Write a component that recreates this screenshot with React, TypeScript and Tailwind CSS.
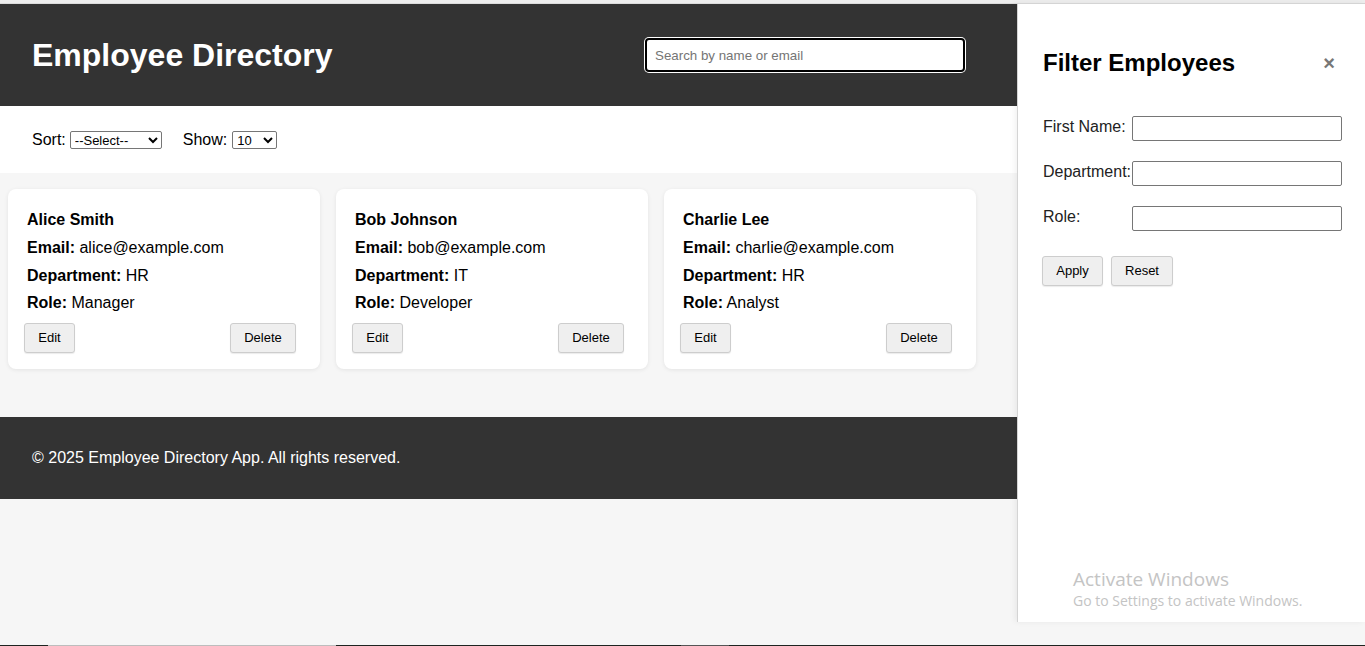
import React from 'react';

interface Employee {
  name: string;
  email: string;
  department: string;
  role: string;
}

const employees: Employee[] = [
  { name: 'Alice Smith', email: 'alice@example.com', department: 'HR', role: 'Manager' },
  { name: 'Bob Johnson', email: 'bob@example.com', department: 'IT', role: 'Developer' },
  { name: 'Charlie Lee', email: 'charlie@example.com', department: 'HR', role: 'Analyst' },
];

const btn =
  'h-[30px] rounded-[3px] border border-[#cdcdcd] bg-[#efefef] text-[13px] text-black shadow-[0_1px_1px_rgba(0,0,0,0.08)]';

const EmployeeCard: React.FC<{ emp: Employee }> = ({ emp }) => {
  return (
    <div className="w-[312px] rounded-lg bg-white px-4 pt-[22px] pb-4 shadow-[0_1px_4px_rgba(0,0,0,0.08)]">
      <div className="pl-[3px] text-[16px] leading-[18px]">
        <p className="mb-[10px] font-bold">{emp.name}</p>
        <p className="mb-[10px]">
          <span className="font-bold">Email:</span> {emp.email}
        </p>
        <p className="mb-[9px]">
          <span className="font-bold">Department:</span> {emp.department}
        </p>
        <p>
          <span className="font-bold">Role:</span> {emp.role}
        </p>
      </div>
      <div className="mt-[11px] mr-2 flex justify-between">
        <button className={`${btn} w-[51px]`}>Edit</button>
        <button className={`${btn} w-[66px]`}>Delete</button>
      </div>
    </div>
  );
};

const FilterPanel: React.FC = () => {
  const fields = [
    { label: 'First Name:', top: 'mt-0' },
    { label: 'Department:', top: 'mt-5' },
    { label: 'Role:', top: 'mt-5' },
  ];
  return (
    <aside className="absolute top-[3px] right-0 h-[619px] w-[348px] border-t border-l border-[#d4d4d4] bg-white pt-[44px] pl-[25px] shadow-[-2px_0_6px_rgba(0,0,0,0.06)]">
      <div className="flex items-center justify-between pr-[30px]">
        <h2 className="text-[24px] leading-[30px] font-bold text-black">Filter Employees</h2>
        <span className="text-[20px] leading-none font-bold text-[#777]">×</span>
      </div>
      <div className="mt-[38px]">
        {fields.map((f) => (
          <div key={f.label} className={`flex items-start ${f.top}`}>
            <label className="w-[89px] pt-[2px] text-[16px] leading-[18px] text-[#222]">{f.label}</label>
            <input className="h-[25px] w-[210px] rounded-[2px] border border-[#767676] bg-white" />
          </div>
        ))}
      </div>
      <div className="mt-[25px] -ml-px flex gap-2">
        <button className={`${btn} w-[61px]`}>Apply</button>
        <button className={`${btn} w-[62px]`}>Reset</button>
      </div>
    </aside>
  );
};

export default function App() {
  return (
    <div
      className="relative flex h-[646px] flex-col overflow-hidden bg-[#f6f6f6] text-black"
      style={{ fontFamily: '"Liberation Sans", Arial, sans-serif' }}
    >
      <div className="h-[4px] shrink-0 border-b border-[#dcdcdc] bg-[#eeeeee]" />

      {/* Header */}
      <header className="flex h-[102px] shrink-0 items-center justify-between bg-[#333333] pr-[400px] pl-8">
        <h1 className="text-[32px] leading-[36px] font-bold text-white">Employee Directory</h1>
        <input
          placeholder="Search by name or email"
          className="h-[34px] w-[320px] rounded-[4px] border-2 border-black bg-white px-[8px] text-[13.33px] ring-1 ring-white placeholder:text-[#757575]"
        />
      </header>

      {/* Controls */}
      <div className="flex h-[67px] shrink-0 items-center bg-white pl-8 text-[16px]">
        <label className="mr-[4px]">Sort:</label>
        <select className="h-[18px] w-[92px] rounded-[2px] border border-[#767676] bg-white text-[13px]">
          <option>--Select--</option>
        </select>
        <label className="mr-[5px] ml-[21px]">Show:</label>
        <select className="h-[18px] w-[45px] rounded-[2px] border border-[#767676] bg-white text-[13px]">
          <option>10</option>
        </select>
      </div>

      {/* Cards */}
      <main className="flex shrink-0 gap-4 px-2 pt-4 pb-12">
        {employees.map((e) => (
          <EmployeeCard key={e.name} emp={e} />
        ))}
      </main>

      <footer className="flex h-[82px] shrink-0 items-center bg-[#333333] pl-8 text-[16px] text-white">
        © 2025 Employee Directory App. All rights reserved.
      </footer>

      <div className="flex-1" />
      <div className="flex h-px shrink-0">
        <div className="w-[48px] bg-[#1e2420]" />
        <div className="w-[288px] bg-[#bdbdbd]" />
        <div className="w-[345px] bg-[#1e2420]" />
        <div className="w-[48px] bg-[#555]" />
        <div className="flex-1 bg-[#1e2420]" />
      </div>

      <FilterPanel />

      {/* Windows watermark */}
      <div
        className="absolute top-[567px] left-[1073px] text-[#c4c4c4]"
        style={{ fontFamily: '"Open Sans", "Noto Sans", sans-serif' }}
      >
        <div className="text-[19px] leading-[24px]">Activate Windows</div>
        <div className="text-[14px] leading-[20px]">Go to Settings to activate Windows.</div>
      </div>
    </div>
  );
}
